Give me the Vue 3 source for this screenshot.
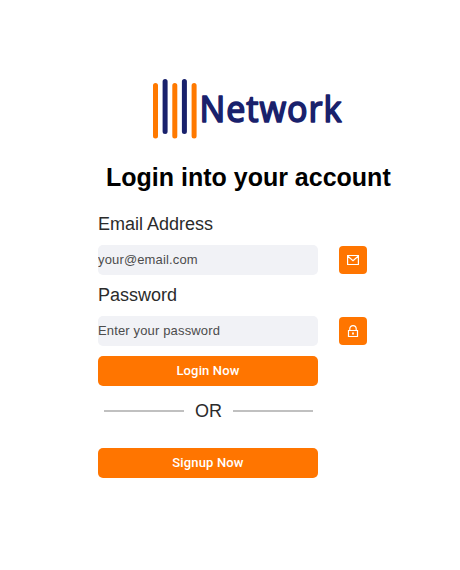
<script setup>
const fields = [
  { id: 'email', label: 'Email Address', type: 'email', placeholder: 'your@email.com' },
  { id: 'password', label: 'Password', type: 'password', placeholder: 'Enter your password' },
]
</script>

<template>
  <main class="page">
    <svg class="logo" width="200" height="64" viewBox="0 0 200 64" role="img" aria-label="Network">
      <g stroke-width="5" stroke-linecap="round">
        <path stroke="#ff7900" d="M4.5 8.5V59M23.8 8.5V59M43.1 8.5V59" />
        <path stroke="#19216c" d="M14.1 4.5V54.5M33.4 4.5V54.5" />
      </g>
      <text class="wordmark" transform="translate(48.5 45.3) scale(.93 1)">Network</text>
    </svg>

    <h1 class="title">Login into your account</h1>

    <form class="form" @submit.prevent>
      <div v-for="f in fields" :key="f.id" class="field">
        <label class="label" :for="f.id">{{ f.label }}</label>
        <div class="row">
          <input :id="f.id" class="input" :type="f.type" :placeholder="f.placeholder" />
          <span class="badge">
            <svg v-if="f.id === 'email'" width="14" height="14" viewBox="0 0 14 14">
              <path d="M1.600 2.500h10.800v9H1.600zM1.600 3l5.400 4.800L12.400 3" />
            </svg>
            <svg v-else width="14" height="14" viewBox="0 0 14 14">
              <path d="M2.500 6.500h9v6h-9zM3.800 6.300V4.800a3.200 3.200 0 0 1 6.400 0v1.500" />
              <path class="hole" d="M6.100 8.600h1.800v1.800H6.100z" />
            </svg>
          </span>
        </div>
      </div>
      <button class="button">Login Now</button>
      <div class="divider"><span class="line"></span><span class="or">OR</span><span class="line"></span></div>
      <button class="button" type="button">Signup Now</button>
    </form>
  </main>
</template>

<style>
body {
  background: #fff;
}
</style>

<style scoped>
.page {
  display: flex;
  flex-direction: column;
  align-items: flex-start;
  box-sizing: border-box;
  width: 460px;
  height: 570px;
  padding: 77px 0 0 98px;
  font-family: "Liberation Sans", Arial, sans-serif;
}
.logo {
  display: block;
  margin-left: 53px;
  fill: none;
  overflow: visible;
}
.wordmark {
  font-family: "Noto Sans", sans-serif;
  font-size: 36.5px;
  font-weight: 400;
  letter-spacing: 1px;
  fill: #19216c;
  stroke: #19216c;
  stroke-width: 1.6;
  stroke-linejoin: round;
}
.title {
  margin: 21px 0 0 8px;
  font-size: 25px;
  line-height: 30px;
  font-weight: 700;
  color: #000;
  white-space: nowrap;
}
.form {
  display: flex;
  flex-direction: column;
  width: 270px;
  padding-top: 18px;
}
.field {
  padding-bottom: 6px;
}
.field + .field {
  padding-bottom: 10px;
}
.label {
  display: block;
  height: 35px;
  font-size: 18px;
  line-height: 28px;
  color: #2b2b2b;
}
.row {
  display: flex;
  align-items: center;
  gap: 21px;
}
.input {
  box-sizing: border-box;
  width: 220px;
  height: 30px;
  padding: 0 0 2px;
  border: 0;
  border-radius: 5px;
  background: #f1f2f6;
  font: 13px "Liberation Sans", Arial, sans-serif;
  letter-spacing: 0.15px;
}
.input::placeholder {
  color: #4c4c4c;
  opacity: 1;
}
.badge {
  display: flex;
  align-items: center;
  justify-content: center;
  width: 28px;
  height: 28px;
  border-radius: 4px;
  background: #ff7500;
}
.badge svg {
  fill: none;
  stroke: #fff;
  stroke-width: 1.2;
}
.badge .hole {
  fill: #fff;
  stroke: none;
}
.button {
  width: 220px;
  height: 30px;
  padding: 0 0 2px;
  border: 0;
  border-radius: 5px;
  background: #ff7500;
  color: #fff;
  font: 500 13px Roboto, sans-serif;
  letter-spacing: 0.15px;
}
.divider {
  display: flex;
  align-items: center;
  justify-content: space-between;
  box-sizing: border-box;
  width: 220px;
  height: 62px;
  padding: 0 5px 12px 6px;
}
.line {
  width: 80px;
  height: 2px;
  background: #c0c0c0;
}
.or {
  font-size: 18px;
  color: #2b2b2b;
}
</style>
